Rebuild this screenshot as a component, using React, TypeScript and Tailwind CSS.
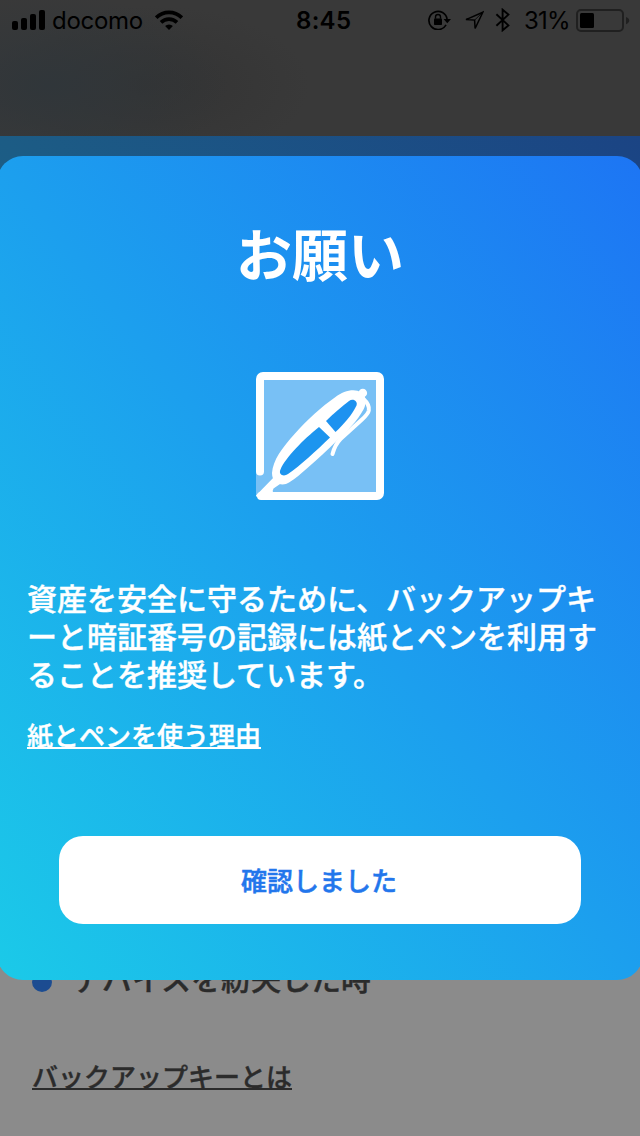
import React from 'react'

const SignalIcon = () => (
  <svg width="34" height="20" viewBox="0 0 34 20" fill="#000">
    <rect x="0" y="11" width="6" height="9" rx="2" />
    <rect x="9" y="8" width="6" height="12" rx="2" />
    <rect x="18" y="4" width="6" height="16" rx="2" />
    <rect x="27" y="0" width="6" height="20" rx="2" />
  </svg>
)

const WifiIcon = () => (
  <svg width="28" height="20" viewBox="0 0 28 20" fill="none" stroke="#000" strokeWidth="3.6">
    <path d="M1.2 7.6a18.2 18.2 0 0 1 25.6 0" />
    <path d="M6 12.4a11.4 11.4 0 0 1 16 0" />
    <path d="M14 20l-3.900-3.900a5.600 5.600 0 0 1 7.800 0z" fill="#000" stroke="none" />
  </svg>
)

const RotationLockIcon = () => (
  <svg width="23" height="20" viewBox="0 0 23 20" fill="none" stroke="#000">
    <path d="M18 14.900a9.100 9.100 0 1 1 1.100-5.400" strokeWidth="1.7" />
    <path d="M15.600 9h7.400l-3.700 4.200z" fill="#000" stroke="none" />
    <rect x="6" y="8.4" width="8" height="6.6" rx="0.8" fill="#000" stroke="none" />
    <path d="M7.500 8.800V7a2.500 2.500 0 0 1 5 0v1.800" strokeWidth="1.4" />
  </svg>
)

const LocationIcon = () => (
  <svg width="20" height="20" viewBox="0 0 20 20" fill="none" stroke="#000" strokeWidth="1.5">
    <path d="M18.800 2.200L2 9.600l8.600.500.500 8.400z" />
    <path d="M18.800 2.200l-8.200 7.900" strokeWidth="0.8" />
  </svg>
)

const BluetoothIcon = () => (
  <svg width="16" height="24" viewBox="0 0 16 24" fill="none" stroke="#000" strokeWidth="1.9">
    <path d="M1.400 6.200l12 11.200-5.800 4.900V1.700l5.800 4.900-12 11.200" />
  </svg>
)

const BatteryIcon = () => (
  <svg width="54" height="24" viewBox="0 0 54 24" fill="none">
    <rect x="1" y="2" width="46" height="21" rx="4" stroke="#202020" strokeWidth="2" />
    <rect x="4" y="5" width="14" height="15" rx="1.5" fill="#000" />
    <path d="M50 9c2.200.800 3.200 2 3.200 3.600s-1 2.800-3.200 3.600z" fill="#202020" />
  </svg>
)

const PenIcon = () => (
  <svg width="128" height="128" viewBox="0 0 128 128" fill="none" strokeLinecap="round" strokeLinejoin="round">
    <path d="M3 3h121v121H0V100z" fill="#78c0f5" />
    <path d="M4 99.500V7a3 3 0 0 1 3-3h114a3 3 0 0 1 3 3v114a3 3 0 0 1-3 3H5" stroke="#fff" strokeWidth="8" />
    <path d="M0 123.500L19 104l8 6-9.500 6.500q-1.500 2 0 4.500v4H3q-3 0-3-1.500z" fill="#fff" />
    {/* barrel */}
    <path d="M16 101C17 88 26 76 39 61.500 51 48 65 35 79.500 25c8-6 19-9 25.500-4.500 6 4 5.500 11 2.500 17-6 11-16 21.500-26.500 31-10 10-19 18-29 27-7 6-12 11-19 15-6 4-17 2-17-9.500z" fill="#fff" />
    <path d="M63 55l11 10.500C60 79 45 93 32 102c-4 3-10 1-7.500-4.500C30 85 47 68 63 55z" fill="#1d95ef" />
    <path d="M70 49c7-7 15-14 23-20 4-3 9 0 7.500 4.500C96 43 88 52 79.500 60z" fill="#1d92f0" />
    <circle cx="106.800" cy="21" r="4.300" fill="#fff" />
    {/* clip */}
    <path d="M107.500 27c4.500 4 5.800 8 5.300 11.500-.5 3-3.500 6-6.800 9L84.500 67c-4.500 4.500-6.500 9.500-8 15" stroke="#fff" strokeWidth="4" />
  </svg>
)

const StatusBar = () => {
  return (
    <div className="flex h-10 items-center pl-3 font-['Inter'] text-[24px] text-black">
      <div className="flex w-[284px] items-center">
        <SignalIcon />
        <span className="ml-1.5 w-[90px] pt-0.5 whitespace-nowrap tracking-[-0.3px]">docomo</span>
        <span className="ml-[13px]"><WifiIcon /></span>
      </div>
      <span className="w-[132px] pt-0.5 font-semibold tracking-[0.3px]">8:45</span>
      <RotationLockIcon />
      <span className="ml-[13px]"><LocationIcon /></span>
      <span className="ml-[11px]"><BluetoothIcon /></span>
      <span className="ml-[13px] w-[46px] pt-0.5 whitespace-nowrap tracking-[-0.8px]">31%</span>
      <span className="ml-[6px]"><BatteryIcon /></span>
    </div>
  )
}

const RequestModal = () => {
  return (
    <div className="absolute top-[156px] -left-[3px] flex h-[824px] w-[646px] flex-col rounded-[26px] bg-[linear-gradient(to_top_right,#1bcae8,#1c9fee_50%,#1d75f4)] px-[30px] text-white">
      <h1 className="mt-[56px] text-center text-[56px] leading-[80px] font-bold">お願い</h1>
      <div className="mt-[80px] flex justify-center">
        <PenIcon />
      </div>
      <p className="mt-[78px] text-[30px] leading-[38px] font-medium whitespace-nowrap [-webkit-text-stroke:0.4px]">
        資産を安全に守るために、バックアップキ<br />
        ーと暗証番号の記録には紙とペンを利用す<br />
        ることを推奨しています。
      </p>
      <a className="mt-[26px] h-[31px] w-[234px] border-b-2 border-white text-[26px] leading-[34px] font-medium whitespace-nowrap [-webkit-text-stroke:0.4px]">紙とペンを使う理由</a>
      <button className="mx-8 mt-[87px] h-[88px] rounded-[24px] bg-white pr-0.5 pb-[2px] text-[26px] font-medium text-[#2276ec] [-webkit-text-stroke:0.5px]">
        確認しました
      </button>
    </div>
  )
}

const App = () => {
  return (
    <div className="relative flex h-[1136px] w-[640px] flex-col overflow-hidden bg-[#8b8b8b] font-['Noto_Sans_CJK_JP',sans-serif]">
      <header className="h-[136px] bg-[#393939] bg-[radial-gradient(ellipse_180px_90px_at_50px_85px,#30363a,transparent),radial-gradient(ellipse_160px_80px_at_150px_85px,#333333,transparent)]">
        <StatusBar />
      </header>
      <div className="h-[824px] bg-[linear-gradient(to_top_right,#1b7086,#1c5c85_50%,#1b4484)]" />
      <div className="flex h-[44px] items-center pl-8 text-[30px] font-medium whitespace-nowrap text-[#2b2b2b] [-webkit-text-stroke:0.4px]">
        <span className="mr-5 h-5 w-5 rounded-full bg-[#1c4c91]" />
        <span className="pb-[10px]">デバイスを紛失した時</span>
      </div>
      <a className="mt-[55px] ml-8 h-[31px] w-[260px] border-b-2 border-[#2b2b2b] text-[26px] leading-[34px] font-medium whitespace-nowrap text-[#2b2b2b] [-webkit-text-stroke:0.4px]">バックアップキーとは</a>
      <RequestModal />
    </div>
  )
}

export default App
